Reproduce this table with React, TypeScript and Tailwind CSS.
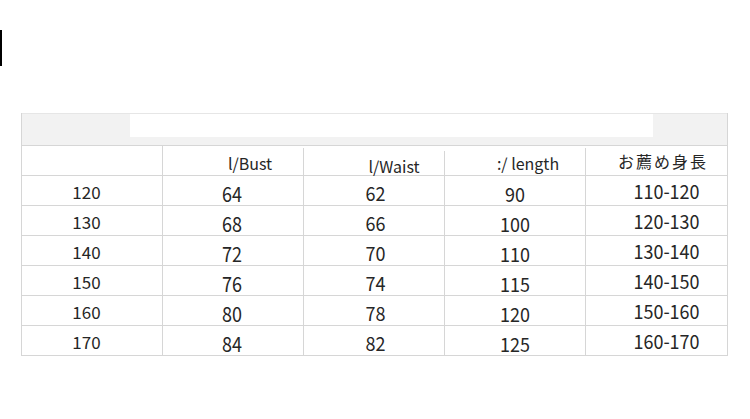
import React from "react";

const rows = [
  ["120", "64", "62", "90", "110-120"],
  ["130", "68", "66", "100", "120-130"],
  ["140", "72", "70", "110", "130-140"],
  ["150", "76", "74", "115", "140-150"],
  ["160", "80", "78", "120", "150-160"],
  ["170", "84", "82", "125", "160-170"],
];

const font = { fontFamily: '"Noto Sans CJK JP", "Noto Sans", sans-serif' };

export default function App() {
  return (
    <div className="w-[750px] h-[419px] bg-white overflow-hidden text-[#262626]" style={font}>
      <div className="pt-[30px]">
        <div className="w-[2px] h-[36px] bg-black" />
      </div>
      <div className="mt-[47px] ml-[21px] w-[707px] border-l border-r border-[#d6d6d6]">
        <div className="h-[33px] border-t border-b border-t-[#e6e6e6] border-b-[#d6d6d6] bg-[#f2f2f2]">
          <div className="ml-[108px] w-[523px] h-[23px] bg-white" />
        </div>
        <div className="grid grid-cols-[141px_141px_141px_141px_141px] h-[30px] border-b border-[#d6d6d6] text-[16px] leading-none">
          <div className="border-r border-[#d6d6d6]" />
          <div className="border-r border-[#d6d6d6] flex items-center justify-center pl-[34px] translate-y-[2px]">l/Bust</div>
          <div className="border-r border-[#d6d6d6] flex items-center justify-center pl-[40px] translate-y-[5px]">l/Waist</div>
          <div className="border-r border-[#d6d6d6] flex items-center justify-center pl-[26px] translate-y-[2px]">:/ length</div>
          <div className="flex items-center justify-center pl-[13px] tracking-[2px]">お薦め身長</div>
        </div>
        {rows.map((r, i) => (
          <div key={i} className="grid grid-cols-[141px_141px_141px_141px_141px] h-[30px] border-b border-[#d6d6d6] leading-none">
            <div className="border-r border-[#d6d6d6] flex items-center justify-center pr-[11px] text-[17px]">
              <span className="translate-y-[1px]">{r[0]}</span>
            </div>
            <div className="border-r border-[#d6d6d6] flex items-center justify-center pr-[2px] text-[18px]">
              <span className="inline-block scale-y-[1.15] translate-y-[2px]">{r[1]}</span>
            </div>
            <div className="border-r border-[#d6d6d6] flex items-center justify-center pl-[3px] text-[18px]">
              <span className="inline-block scale-y-[1.1] translate-y-[1px]">{r[2]}</span>
            </div>
            <div className="border-r border-[#d6d6d6] flex items-center justify-center text-[18px]">
              <span className="inline-block scale-y-[1.1] translate-y-[2px]">{r[3]}</span>
            </div>
            <div className="flex items-center justify-center pl-[20px] text-[18px]">
              <span className="inline-block scale-y-[1.1] -translate-y-[1px]">{r[4]}</span>
            </div>
          </div>
        ))}
      </div>
    </div>
  );
}
